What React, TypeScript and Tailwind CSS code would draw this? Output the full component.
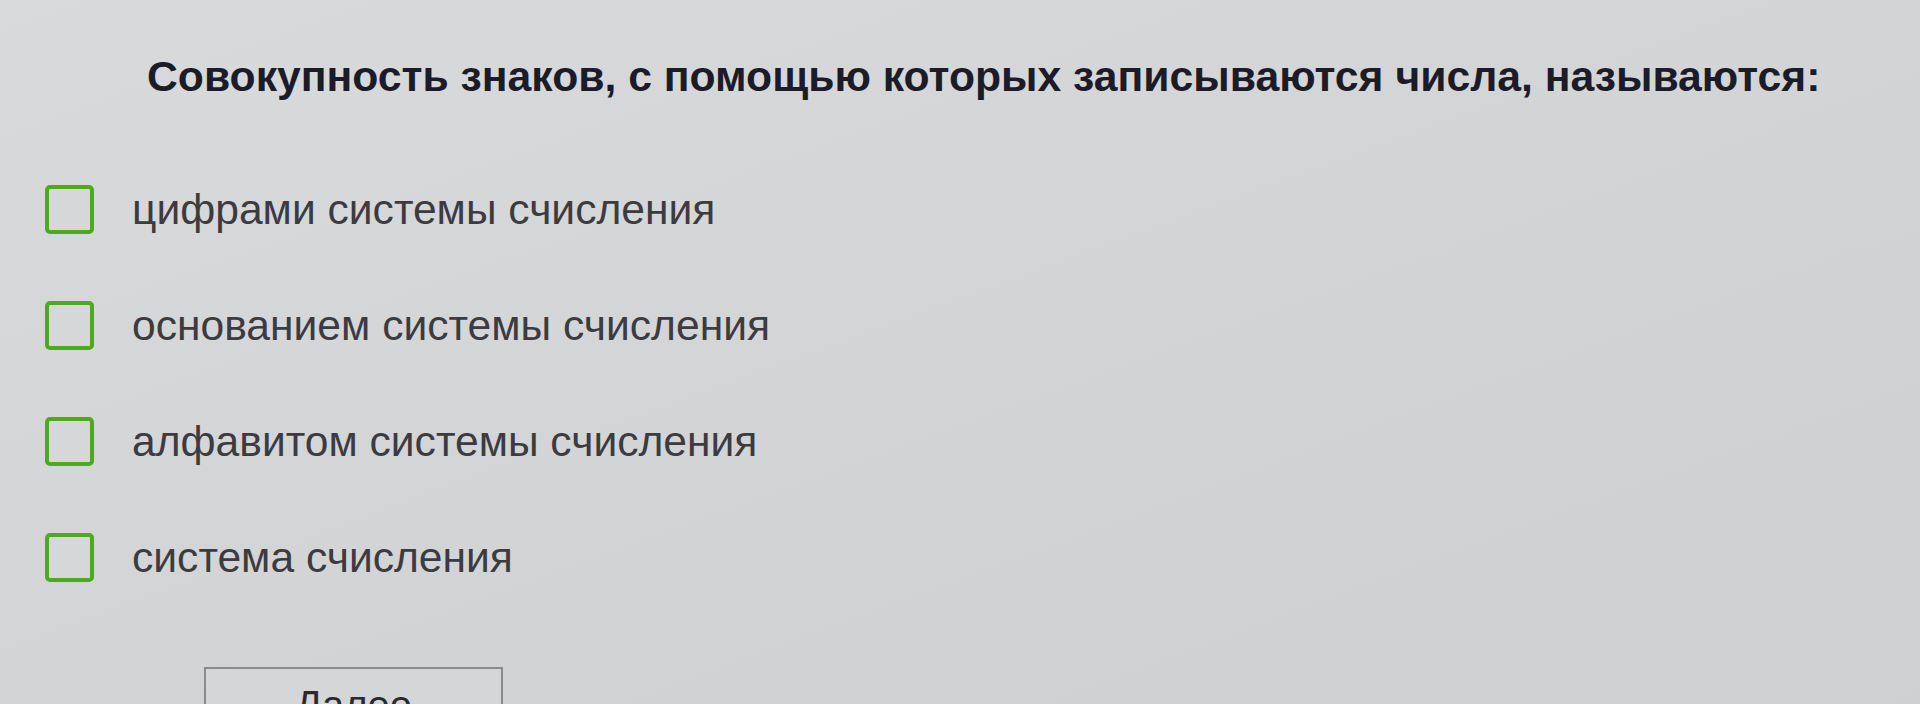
import React from 'react';

const options = [
  'цифрами системы счисления',
  'основанием системы счисления',
  'алфавитом системы счисления',
  'система счисления',
];

const Checkbox: React.FC = () => (
  <span className="block w-[49px] h-[49px] shrink-0 rounded-[5px] border-[4px] border-[#4caa1c] bg-[#d6d7d9]" />
);

export default function App() {
  return (
    <div className="w-[1920px] h-[704px] overflow-hidden bg-gradient-to-br from-[#d9dadc] via-[#d3d4d6] to-[#cfd0d2] font-['Liberation_Sans',Arial,sans-serif]">
      <h1 className="pt-[51px] pl-[147px] text-[42.7px] font-bold leading-[50px] text-[#1c1c28] whitespace-nowrap">
        Совокупность знаков, с помощью которых записываются числа, называются:
      </h1>

      <div className="mt-[83px] pl-[45px] flex flex-col gap-[66px]">
        {options.map((opt) => (
          <label key={opt} className="flex items-center gap-[38px] cursor-pointer">
            <Checkbox />
            <span className="text-[42.6px] leading-[50px] text-[#3b3b40] whitespace-nowrap">{opt}</span>
          </label>
        ))}
      </div>

      <div className="mt-[85px] pl-[204px]">
        <button className="w-[299px] h-[80px] border-2 border-[#8a8b8d] bg-[#d5d6d8] text-[40px] leading-none text-[#2a2a2e] flex justify-center pt-[16px]">
          Далее
        </button>
      </div>
    </div>
  );
}
